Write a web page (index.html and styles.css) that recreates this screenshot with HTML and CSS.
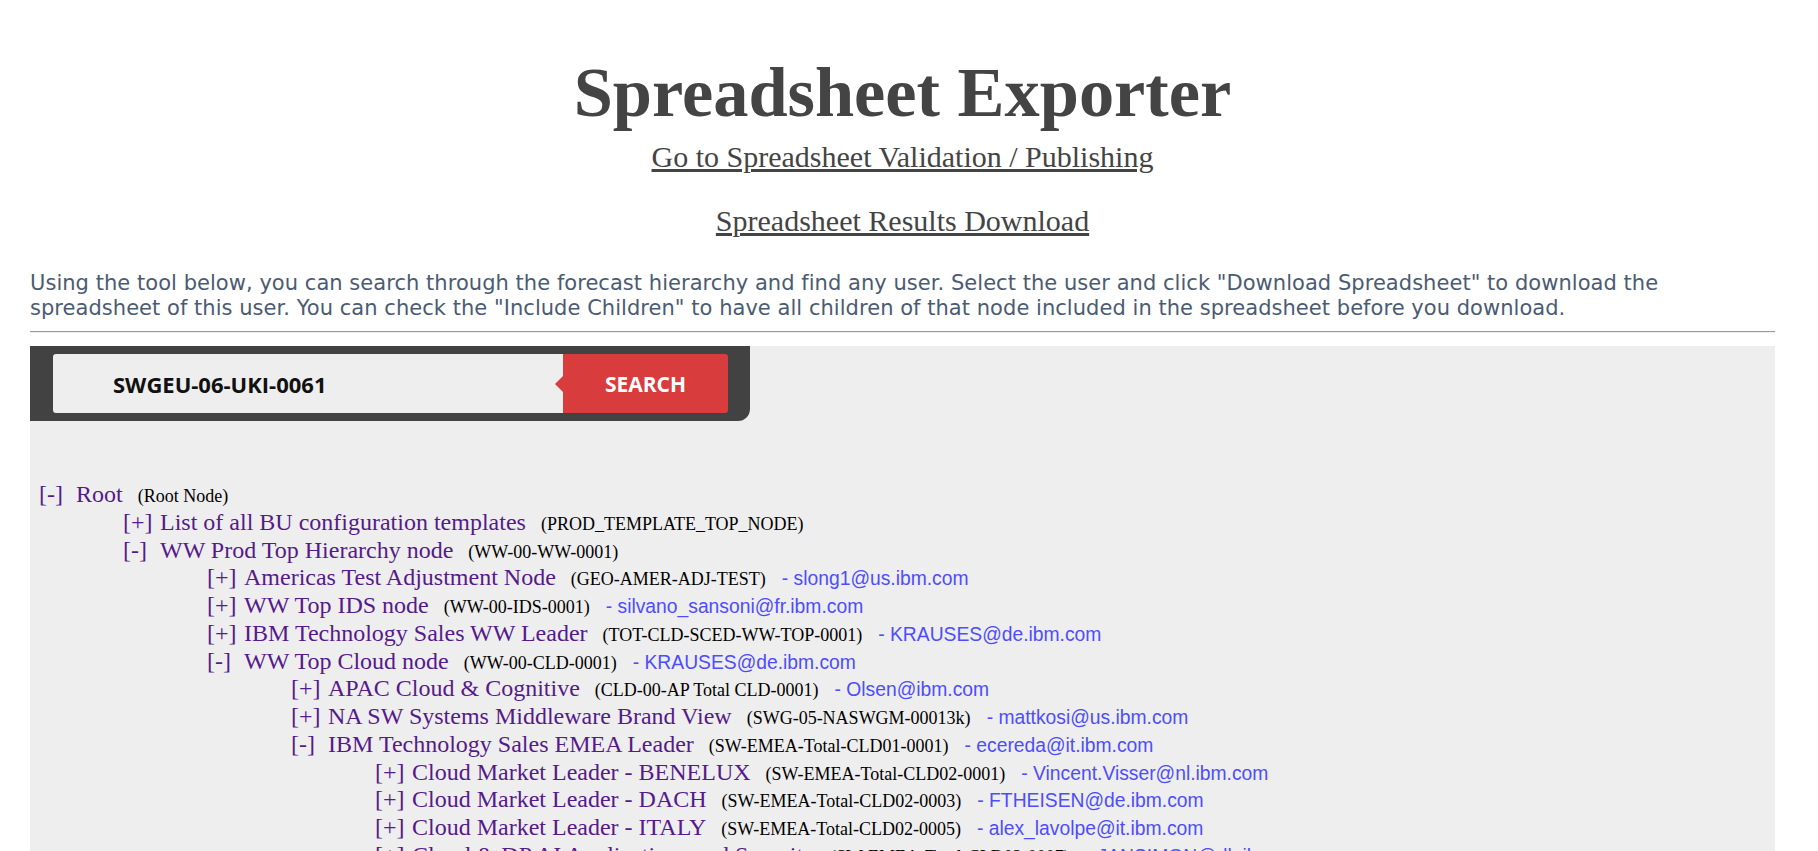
FILE: index.html
```html
<!DOCTYPE html>
<html lang="en">
<head>
<meta charset="utf-8">
<title>Spreadsheet Exporter</title>
<link rel="stylesheet" href="styles.css">
</head>
<body>
<div class="page">
  <h1 class="title">Spreadsheet Exporter</h1>
  <p class="nav-link first"><a href="#">Go to Spreadsheet Validation / Publishing</a></p>
  <p class="nav-link"><a href="#">Spreadsheet Results Download</a></p>
  <p class="intro">Using the tool below, you can search through the forecast hierarchy and find any user. Select the user and click "Download Spreadsheet" to download the spreadsheet of this user. You can check the "Include Children" to have all children of that node included in the spreadsheet before you download.</p>
  <hr class="rule">
  <div class="panel">
    <form class="search">
      <input class="search-input" type="text" value="SWGEU-06-UKI-0061">
      <button class="search-btn" type="button">SEARCH</button>
    </form>
    <ul class="tree root-level">
      <li><div class="row"><span class="toggle">[-]</span><span class="name">Root</span><span class="code">(Root Node)</span></div>
        <ul class="tree">
          <li><div class="row"><span class="toggle">[+]</span><span class="name">List of all BU configuration templates</span><span class="code">(PROD_TEMPLATE_TOP_NODE)</span></div></li>
          <li><div class="row"><span class="toggle">[-]</span><span class="name">WW Prod Top Hierarchy node</span><span class="code">(WW-00-WW-0001)</span></div>
            <ul class="tree">
              <li><div class="row"><span class="toggle">[+]</span><span class="name">Americas Test Adjustment Node</span><span class="code">(GEO-AMER-ADJ-TEST)</span><span class="email">- slong1@us.ibm.com</span></div></li>
              <li><div class="row"><span class="toggle">[+]</span><span class="name">WW Top IDS node</span><span class="code">(WW-00-IDS-0001)</span><span class="email">- silvano_sansoni@fr.ibm.com</span></div></li>
              <li><div class="row"><span class="toggle">[+]</span><span class="name">IBM Technology Sales WW Leader</span><span class="code">(TOT-CLD-SCED-WW-TOP-0001)</span><span class="email">- KRAUSES@de.ibm.com</span></div></li>
              <li><div class="row"><span class="toggle">[-]</span><span class="name">WW Top Cloud node</span><span class="code">(WW-00-CLD-0001)</span><span class="email">- KRAUSES@de.ibm.com</span></div>
                <ul class="tree">
                  <li><div class="row"><span class="toggle">[+]</span><span class="name">APAC Cloud &amp; Cognitive</span><span class="code">(CLD-00-AP Total CLD-0001)</span><span class="email">- Olsen@ibm.com</span></div></li>
                  <li><div class="row"><span class="toggle">[+]</span><span class="name">NA SW Systems Middleware Brand View</span><span class="code">(SWG-05-NASWGM-00013k)</span><span class="email">- mattkosi@us.ibm.com</span></div></li>
                  <li><div class="row"><span class="toggle">[-]</span><span class="name">IBM Technology Sales EMEA Leader</span><span class="code">(SW-EMEA-Total-CLD01-0001)</span><span class="email">- ecereda@it.ibm.com</span></div>
                    <ul class="tree">
                      <li><div class="row"><span class="toggle">[+]</span><span class="name">Cloud Market Leader - BENELUX</span><span class="code">(SW-EMEA-Total-CLD02-0001)</span><span class="email">- Vincent.Visser@nl.ibm.com</span></div></li>
                      <li><div class="row"><span class="toggle">[+]</span><span class="name">Cloud Market Leader - DACH</span><span class="code">(SW-EMEA-Total-CLD02-0003)</span><span class="email">- FTHEISEN@de.ibm.com</span></div></li>
                      <li><div class="row"><span class="toggle">[+]</span><span class="name">Cloud Market Leader - ITALY</span><span class="code">(SW-EMEA-Total-CLD02-0005)</span><span class="email">- alex_lavolpe@it.ibm.com</span></div></li>
                      <li><div class="row"><span class="toggle">[+]</span><span class="name">Cloud &amp; DP AI Applications and Security</span><span class="code">(SW-EMEA-Total-CLD02-0007)</span><span class="email">- JANSIMON@dk.ibm.com</span></div></li>
                      <li><div class="row"><span class="toggle">[+]</span><span class="name">Cloud Market Leader - NORDICS</span><span class="code">(SW-EMEA-Total-CLD02-0009)</span><span class="email">- NORDICS@dk.ibm.com</span></div></li>
                    </ul>
                  </li>
                </ul>
              </li>
            </ul>
          </li>
        </ul>
      </li>
    </ul>
  </div>
</div>
</body>
</html>
```
FILE: styles.css
```css
html, body {
  margin: 0;
  padding: 0;
  background: #ffffff;
}

.page {
  margin-left: 30px;
  width: 1745px;
}

.title {
  margin: 52px 0 0;
  text-align: center;
  font-family: "Liberation Serif", "Times New Roman", serif;
  font-weight: bold;
  font-size: 70.4px;
  line-height: 80px;
  color: #444444;
}

.nav-link {
  margin: 30px 0 0;
  text-align: center;
  font-family: "Liberation Serif", "Times New Roman", serif;
  font-size: 30px;
  line-height: 34px;
}

.nav-link.first {
  margin-top: 8px;
}

.nav-link a {
  color: #444444;
  text-decoration: underline;
}

.intro {
  margin: 33px 0 0;
  font-family: "DejaVu Sans", Verdana, sans-serif;
  font-size: 21px;
  letter-spacing: 0.04px;
  line-height: 25px;
  color: #4b5b72;
}

.rule {
  margin: 10px 0 13px;
  height: 0;
  border: 0;
  border-top: 1px solid #9a9a9a;
  border-bottom: 1px solid #eeeeee;
}

.panel {
  background: #eeeeee;
  min-height: 520px;
  padding-bottom: 40px;
}

.search {
  display: flex;
  align-items: stretch;
  width: 720px;
  box-sizing: border-box;
  padding: 8px 22px 8px 23px;
  background: #424242;
  border-bottom-right-radius: 12px;
  margin: 0;
}

.search-input {
  flex: 1;
  height: 59px;
  box-sizing: border-box;
  border: 0;
  border-radius: 3px 0 0 3px;
  background: #eeeeee;
  padding: 0 0 0 60px;
  font-family: "Open Sans", sans-serif;
  font-weight: bold;
  font-size: 22px;
  color: #111111;
  outline: none;
}

.search-btn {
  position: relative;
  width: 165px;
  border: 0;
  border-radius: 0 3px 3px 0;
  background: #d83c3d;
  color: #ffffff;
  font-family: "Open Sans", sans-serif;
  font-weight: bold;
  font-size: 21px;
  padding: 0;
  cursor: pointer;
}

.search-btn::before {
  content: "";
  position: absolute;
  left: -8px;
  top: 50%;
  margin-top: -8px;
  border-style: solid;
  border-width: 8px 8px 8px 0;
  border-color: transparent #d83c3d transparent transparent;
}

.tree {
  list-style: none;
  margin: 0;
  padding: 0 0 0 84px;
}

.tree.root-level {
  padding: 0 0 0 9px;
  margin-top: 60px;
}

.row {
  display: flex;
  align-items: baseline;
  white-space: nowrap;
  font-family: "Liberation Serif", "Times New Roman", serif;
  line-height: 27.75px;
  height: 27.75px;
}

.toggle {
  display: inline-block;
  width: 37px;
  font-size: 24px;
  color: #551a8b;
}

.name {
  font-size: 24px;
  color: #551a8b;
}

.code {
  margin-left: 15px;
  font-size: 18px;
  color: #000000;
}

.email {
  margin-left: 16px;
  font-family: "Liberation Sans", Arial, sans-serif;
  font-size: 19.3px;
  color: #4d4dff;
}
```
